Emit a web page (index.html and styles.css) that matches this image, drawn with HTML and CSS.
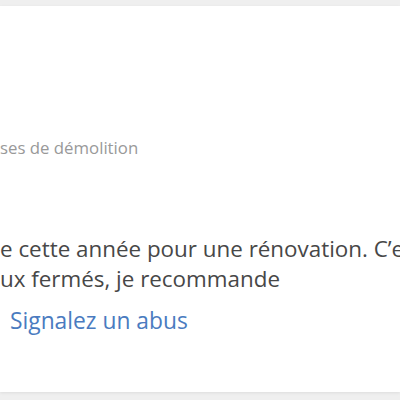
FILE: index.html
```html
<!DOCTYPE html>
<html lang="fr">
<head>
    <meta charset="UTF-8">
    <meta name="viewport" content="width=device-width, initial-scale=1.0">
    <title>Avis</title>
    <link rel="stylesheet" href="styles.css">
</head>
<body>
    <div class="card">
        <div class="review">
            <div class="category">ses de démolition</div>
            <p class="text">e cette année pour une rénovation. C’est<br>ux fermés, je recommande</p>
            <div class="actions">
                <a class="abuse" href="#">Signalez un abus</a>
            </div>
        </div>
    </div>
</body>
</html>
```

FILE: styles.css
```css
* {
    margin: 0;
    padding: 0;
    box-sizing: border-box;
}

html, body {
    width: 400px;
    height: 400px;
    overflow: hidden;
}

body {
    font-family: 'Open Sans', 'Noto Sans', sans-serif;
    background: #efefef;
    padding: 6px 0 8px;
}

.card {
    height: 386px;
    background: #fff;
    box-shadow: 0 1px 3px rgba(0, 0, 0, 0.08);
    overflow: hidden;
}

.review {
    padding-top: 131px;
    white-space: nowrap;
}

.category {
    font-size: 16.8px;
    line-height: 22px;
    color: #999;
}

.text {
    margin-top: 75px;
    font-size: 22.4px;
    line-height: 30px;
    color: #474747;
}

.actions {
    margin-top: 12px;
    padding-left: 10px;
    line-height: 30px;
}

.abuse {
    font-size: 22.8px;
    color: #4a7bc0;
    text-decoration: none;
}
```
